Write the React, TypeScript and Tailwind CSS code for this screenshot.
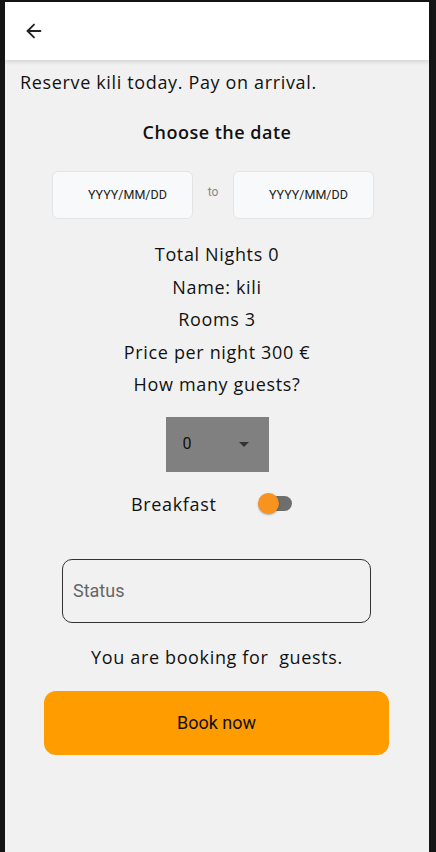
import { ArrowLeft } from 'lucide-react';

function DateBox() {
  return (
    <div className="w-[141px] h-[48px] rounded-md border border-[#e2e4e8] bg-[#f8f9fb] flex items-center pl-[35px] text-[12.5px] text-[#222] font-['Roboto',sans-serif]">
      YYYY/MM/DD
    </div>
  );
}

export default function App() {
  return (
    <div className="w-[436px] h-[852px] bg-[#151515] pt-[2px] pl-[5px] pr-[7px] flex">
      <div className="flex-1 bg-[#f1f1f1] flex flex-col font-['Open_Sans',sans-serif] text-[18px] tracking-[0.65px] text-[#111]">
        <header className="h-[58px] bg-white shadow-[0_2px_4px_rgba(0,0,0,0.12)] flex items-center pl-[18px] shrink-0">
          <ArrowLeft size={22} strokeWidth={2} className="text-[#222]" />
        </header>

        <p className="mt-[10px] pl-[15px] leading-[24px]">Reserve kili today. Pay on arrival.</p>

        <h2 className="mt-[26px] text-center font-semibold tracking-[0.5px] leading-[24px]">Choose the date</h2>

        <div className="mt-[27px] flex items-center pl-[47px] tracking-normal">
          <DateBox />
          <span className="w-[40px] text-center text-[12px] text-[#888] font-['Roboto',sans-serif] -mt-[6px]">to</span>
          <DateBox />
        </div>

        <div className="mt-[19px] flex flex-col items-center leading-[32.5px]">
          <span>Total Nights 0</span>
          <span>Name: kili</span>
          <span>Rooms 3</span>
          <span>Price per night 300 €</span>
          <span>How many guests?</span>
        </div>

        <div className="mt-[16px] flex justify-center">
          <div className="w-[103px] h-[55px] bg-[#808080] flex items-center justify-between pl-[17px] pr-[20px] font-['Roboto',sans-serif] text-[16px] tracking-normal text-[#111]">
            <span>0</span>
            <span className="w-0 h-0 border-l-[5px] border-r-[5px] border-t-[5px] border-l-transparent border-r-transparent border-t-[#333]" />
          </div>
        </div>

        <div className="mt-[20px] flex items-center pl-[126px]">
          <span className="leading-[24px] w-[127px]">Breakfast</span>
          <div className="relative w-[34px] h-[21px] flex items-center">
            <div className="ml-[7px] w-[27px] h-[15px] rounded-full bg-[#6e6e6e]" />
            <div className="absolute left-0 top-0 w-[21px] h-[21px] rounded-full bg-[#f7931e] shadow-[0_1px_2px_rgba(0,0,0,0.3)]" />
          </div>
        </div>

        <div className="mt-[43px] ml-[57px] w-[309px] h-[64px] rounded-[10px] border border-[#333] flex items-center pl-[10px] font-['Roboto',sans-serif] text-[18px] tracking-normal text-[#666]">
          Status
        </div>

        <p className="mt-[22px] text-center leading-[24px]">You are booking for &nbsp;guests.</p>

        <button className="mt-[22px] ml-[39px] w-[345px] h-[64px] rounded-[12px] bg-[#ff9c00] font-['Roboto',sans-serif] text-[18px] tracking-normal text-[#111]">
          Book now
        </button>
      </div>
    </div>
  );
}
